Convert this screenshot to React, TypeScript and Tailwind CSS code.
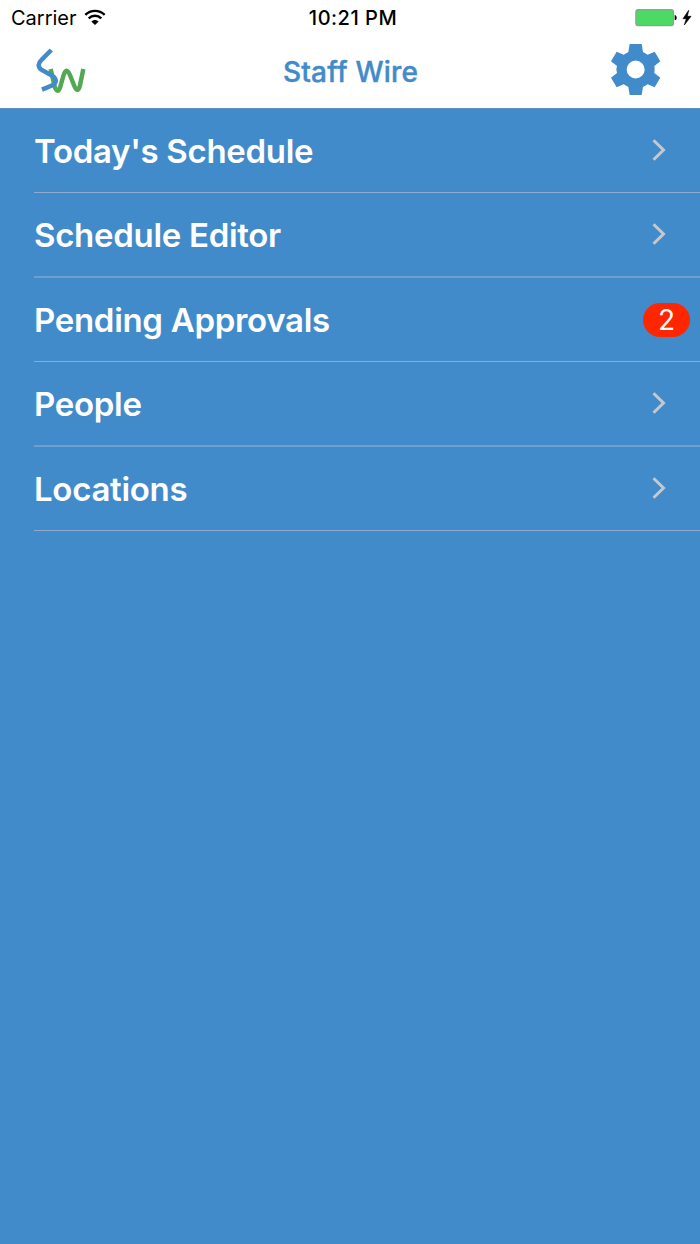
interface MenuItem {
  label: string;
  badge?: number;
}

const menuItems: MenuItem[] = [
  { label: "Today's Schedule" },
  { label: 'Schedule Editor' },
  { label: 'Pending Approvals', badge: 2 },
  { label: 'People' },
  { label: 'Locations' },
];

function WifiIcon() {
  return (
    <svg className="w-[22px] h-4 -mt-[3px]" viewBox="0 0 66 48" fill="none" stroke="#000" strokeWidth="7">
      <path d="M4 17.500C20 1.500 46 1.500 62 17.500" />
      <path d="M14 28C25 17.500 41 17.500 52 28" />
      <path d="M22 37.500C28 31 38 31 44 37.500L33 48Z" fill="#000" stroke="none" />
    </svg>
  );
}

function BatteryIcon() {
  return (
    <svg className="w-[57px] h-[18px]" viewBox="0 0 171 54">
      <rect x="2.500" y="2" width="113" height="48" rx="7" fill="#4cd964" stroke="#9a9a9a" strokeWidth="3.500" />
      <path d="M119 18c4 1 6 4 6 8s-2 7-6 8z" fill="#000" />
      <path d="M161 4l-17 25h10l-6 19 20-26h-11z" fill="#000" stroke="#000" strokeWidth="2" />
    </svg>
  );
}

function Logo() {
  return (
    <svg className="w-[51px] h-[46px] mt-[3px]" viewBox="105 144 153 138" fill="none" strokeWidth="13.500">
      <path
        d="M152 207L164 260Q173 284 181 260L190 228Q199 197 211 228L223 258Q233 282 240 256L250 207"
        stroke="#53a953"
      />
      <path
        d="M154 150L126 178Q107 196 124 209L158 228Q177 243 157 256L126 269"
        stroke="#428bca"
      />
    </svg>
  );
}

function GearIcon() {
  return (
    <svg className="w-[52px] h-[53px]" viewBox="60 129 156 159" fill="#428bca">
      <path
        fillRule="evenodd"
        d="M119 132H155L159 156L173 164L194 155L211 184L193 198L194 208L193 219L211 233L194 262L173 253L159 261L155 285H119L115 261L101 253L80 262L63 233L81 219L79 208L81 198L63 184L80 155L101 164L115 156ZM137 181.500a27 27 0 1 0 0 54a27 27 0 1 0 0-54Z"
      />
    </svg>
  );
}

function ChevronIcon() {
  return (
    <svg className="w-[14px] h-[22px] mr-[34px] mb-0.5" viewBox="0 0 14 22" fill="none" stroke="#c7c7cc" strokeWidth="3">
      <path d="M1.500 1.200L11.500 11L1.500 20.800" />
    </svg>
  );
}

function StatusBar() {
  return (
    <div className="grid grid-cols-3 items-center h-9 pl-[11px] pr-2 text-[20px] text-black">
      <div className="flex items-center gap-[7px]">
        <span>Carrier</span>
        <WifiIcon />
      </div>
      <span className="text-center font-medium tracking-[0.5px] pl-[3px]">10:21 PM</span>
      <div className="flex justify-end">
        <BatteryIcon />
      </div>
    </div>
  );
}

function NavBar() {
  return (
    <div className="grid grid-cols-3 items-center h-[72px] pb-[5px] pl-[35px] pr-[38px]">
      <Logo />
      <h1 className="text-center text-[28px] font-medium tracking-[0.2px] text-[#428bca] pt-1 pl-1 [-webkit-text-stroke:0.4px_#428bca]">
        Staff Wire
      </h1>
      <div className="flex justify-end">
        <GearIcon />
      </div>
    </div>
  );
}

function MenuRow({ label, badge }: MenuItem) {
  return (
    <li className="flex items-center justify-between h-[84px] border-b border-[#8fabcf] even:h-[85px] even:border-b-2 even:border-[#6f9fce]">
      <span className="pt-0.5 text-[33px] font-semibold tracking-[-0.3px] text-white">{label}</span>
      {badge ? (
        <span className="flex items-center justify-center w-[47px] h-[34px] mr-[10px] pt-px rounded-full bg-[#ff2600] text-[28px] text-white">
          {badge}
        </span>
      ) : (
        <ChevronIcon />
      )}
    </li>
  );
}

export default function App() {
  return (
    <div className="min-h-screen bg-[#428bca] font-['Inter','Liberation_Sans',sans-serif]">
      <header className="bg-white border-b border-[#5c92bf]">
        <StatusBar />
        <NavBar />
      </header>
      <ul className="pl-[34px]">
        {menuItems.map((item) => (
          <MenuRow key={item.label} {...item} />
        ))}
      </ul>
    </div>
  );
}
